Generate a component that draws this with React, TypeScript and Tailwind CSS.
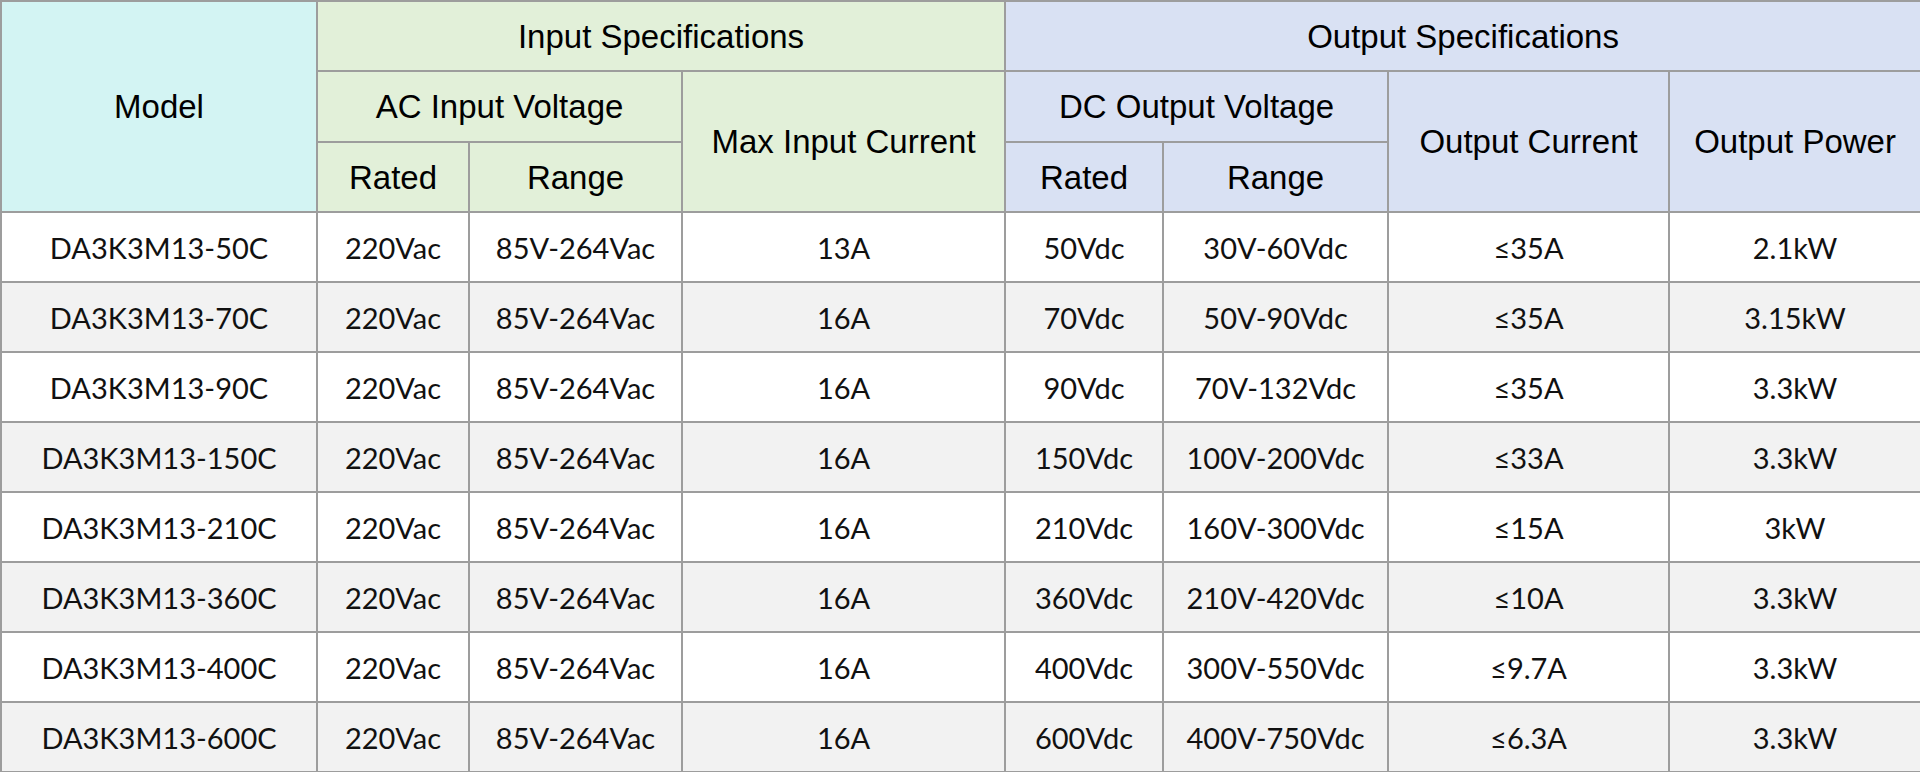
import React from "react";

const rows = [
  ["DA3K3M13-50C", "220Vac", "85V-264Vac", "13A", "50Vdc", "30V-60Vdc", "≤35A", "2.1kW"],
  ["DA3K3M13-70C", "220Vac", "85V-264Vac", "16A", "70Vdc", "50V-90Vdc", "≤35A", "3.15kW"],
  ["DA3K3M13-90C", "220Vac", "85V-264Vac", "16A", "90Vdc", "70V-132Vdc", "≤35A", "3.3kW"],
  ["DA3K3M13-150C", "220Vac", "85V-264Vac", "16A", "150Vdc", "100V-200Vdc", "≤33A", "3.3kW"],
  ["DA3K3M13-210C", "220Vac", "85V-264Vac", "16A", "210Vdc", "160V-300Vdc", "≤15A", "3kW"],
  ["DA3K3M13-360C", "220Vac", "85V-264Vac", "16A", "360Vdc", "210V-420Vdc", "≤10A", "3.3kW"],
  ["DA3K3M13-400C", "220Vac", "85V-264Vac", "16A", "400Vdc", "300V-550Vdc", "≤9.7A", "3.3kW"],
  ["DA3K3M13-600C", "220Vac", "85V-264Vac", "16A", "600Vdc", "400V-750Vdc", "≤6.3A", "3.3kW"],
];

const th =
  "border-2 border-[#9d9d9d] text-center align-middle font-normal text-black text-[33px] leading-none p-0";
const td =
  "border-2 border-[#9d9d9d] text-center align-middle text-[#111] text-[29px] leading-none p-0";

export default function App() {
  return (
    <div className="w-[1920px] h-[772px] bg-white overflow-hidden">
      <table
        className="table-fixed border-collapse w-[1920px] h-[772px]"
        style={{ fontFamily: '"Liberation Sans", Arial, sans-serif' }}
      >
        <colgroup>
          <col className="w-[316px]" />
          <col className="w-[152px]" />
          <col className="w-[213px]" />
          <col className="w-[323px]" />
          <col className="w-[158px]" />
          <col className="w-[225px]" />
          <col className="w-[281px]" />
          <col className="w-[252px]" />
        </colgroup>
        <thead>
          <tr className="h-[70px]">
            <th rowSpan={3} className={`${th} bg-[#d3f4f3]`}>Model</th>
            <th colSpan={3} className={`${th} bg-[#e2f0d9]`}>Input Specifications</th>
            <th colSpan={4} className={`${th} bg-[#d9e1f3]`}>Output Specifications</th>
          </tr>
          <tr className="h-[71px]">
            <th colSpan={2} className={`${th} bg-[#e2f0d9]`}>AC Input Voltage</th>
            <th rowSpan={2} className={`${th} bg-[#e2f0d9]`}>Max Input Current</th>
            <th colSpan={2} className={`${th} bg-[#d9e1f3]`}>DC Output Voltage</th>
            <th rowSpan={2} className={`${th} bg-[#d9e1f3]`}>Output Current</th>
            <th rowSpan={2} className={`${th} bg-[#d9e1f3]`}>Output Power</th>
          </tr>
          <tr className="h-[70px]">
            <th className={`${th} bg-[#e2f0d9]`}>Rated</th>
            <th className={`${th} bg-[#e2f0d9]`}>Range</th>
            <th className={`${th} bg-[#d9e1f3]`}>Rated</th>
            <th className={`${th} bg-[#d9e1f3]`}>Range</th>
          </tr>
        </thead>
        <tbody style={{ fontFamily: 'Lato, "Open Sans", sans-serif' }}>
          {rows.map((r, i) => (
            <tr key={i} className={`h-[70px] ${i % 2 === 1 ? "bg-[#f2f2f2]" : "bg-white"}`}>
              {r.map((c, j) => (
                <td key={j} className={td}>
                  {c}
                </td>
              ))}
            </tr>
          ))}
        </tbody>
      </table>
    </div>
  );
}
